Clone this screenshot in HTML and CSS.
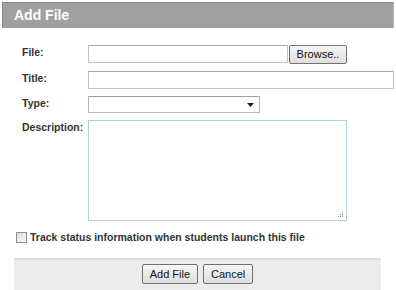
FILE: index.html
```html
<!DOCTYPE html>
<html>
<head>
<meta charset="utf-8">
<link rel="stylesheet" href="styles.css">
</head>
<body>
<div class="dialog">
  <div class="header">Add File</div>
  <div class="form">
    <div class="row">
      <label class="lbl">File:</label>
      <div class="ctl file-ctl">
        <span class="input file-input"></span>
        <span class="btn browse">Browse..</span>
      </div>
    </div>
    <div class="row">
      <label class="lbl">Title:</label>
      <div class="ctl"><span class="input title-input"></span></div>
    </div>
    <div class="row">
      <label class="lbl">Type:</label>
      <div class="ctl">
        <span class="input select"><svg class="arrow" width="7" height="4" viewBox="0 0 7 4"><path d="M0 0h7L3.5 4z" fill="#222"/></svg></span>
      </div>
    </div>
    <div class="row">
      <label class="lbl">Description:</label>
      <div class="ctl">
        <span class="textarea"><svg class="grip" width="7" height="7" viewBox="0 0 7 7"><g fill="#9a9a9a"><rect x="5" y="1" width="1" height="1"/><rect x="3" y="3" width="1" height="1"/><rect x="5" y="3" width="1" height="1"/><rect x="1" y="5" width="1" height="1"/><rect x="3" y="5" width="1" height="1"/><rect x="5" y="5" width="1" height="1"/></g></svg></span>
      </div>
    </div>
    <div class="check-row">
      <span class="checkbox"></span>
      <span class="check-text">Track status information when students launch this file</span>
    </div>
  </div>
  <div class="footer">
    <span class="btn">Add File</span>
    <span class="btn">Cancel</span>
  </div>
</div>
</body>
</html>
```
FILE: styles.css
```css
html, body {
  margin: 0;
  padding: 0;
  background: #fff;
}
body {
  font-family: "Liberation Sans", Arial, sans-serif;
  width: 396px;
  height: 290px;
  overflow: hidden;
}
.dialog {
  padding-top: 2px;
}
.header {
  margin: 0 2px;
  height: 25px;
  background: #a0a0a0;
  border-top: 1px solid #8a8a8a;
  border-left: 1px solid #8a8a8a;
  border-right: 1px solid #b8b8b8;
  color: #fff;
  font-weight: bold;
  font-size: 14px;
  line-height: 25px;
  padding-left: 11px;
}
.form {
  padding: 17px 0 0 22px;
}
.row {
  display: flex;
  align-items: flex-start;
  margin-bottom: 7px;
}
.lbl {
  width: 66px;
  font-size: 10.5px;
  font-weight: bold;
  color: #333;
  line-height: 14px;
  padding-top: 0;
}
.ctl {
  display: flex;
  align-items: flex-start;
}
.input {
  display: block;
  box-sizing: border-box;
  height: 18px;
  border: 1px solid #c4c4c4;
  border-top-color: #a8a8a8;
  background: #fff;
}
.file-input {
  width: 200px;
}
.title-input {
  width: 306px;
}
.select {
  width: 172px;
  height: 17px;
  position: relative;
  border-color: #b8b8b8;
  border-top-color: #a0a0a0;
}
.arrow {
  position: absolute;
  right: 5px;
  top: 6px;
}
.textarea {
  display: block;
  box-sizing: border-box;
  width: 259px;
  height: 101px;
  border: 1px solid #a9d2ea;
  position: relative;
}
.grip {
  position: absolute;
  right: 2px;
  bottom: 2px;
}
.btn {
  display: inline-block;
  box-sizing: border-box;
  height: 19px;
  padding: 0 6px;
  border: 1px solid #707070;
  border-radius: 2px;
  background: linear-gradient(#f6f6f6, #dedede);
  font-size: 11px;
  line-height: 17px;
  color: #111;
  text-align: center;
}
.browse {
  margin-left: 1px;
  width: 58px;
}
.check-row {
  display: flex;
  align-items: center;
  margin-top: 10px;
  margin-left: -6px;
}
.checkbox {
  display: inline-block;
  box-sizing: border-box;
  width: 11px;
  height: 11px;
  border: 1px solid #8e8f8f;
  background: linear-gradient(135deg, #dcdcdc, #fafafa);
  margin-right: 3px;
}
.check-text {
  font-size: 10.5px;
  font-weight: bold;
  color: #333;
}
.footer {
  margin: 15px 15px 0 14px;
  height: 32px;
  background: #ececec;
  border-top: 2px solid #dcdcdc;
  display: flex;
  justify-content: center;
  gap: 5px;
  padding-top: 4px;
  box-sizing: border-box;
}
.footer .btn {
  height: 20px;
  line-height: 18px;
  padding: 0 7px;
}
```
